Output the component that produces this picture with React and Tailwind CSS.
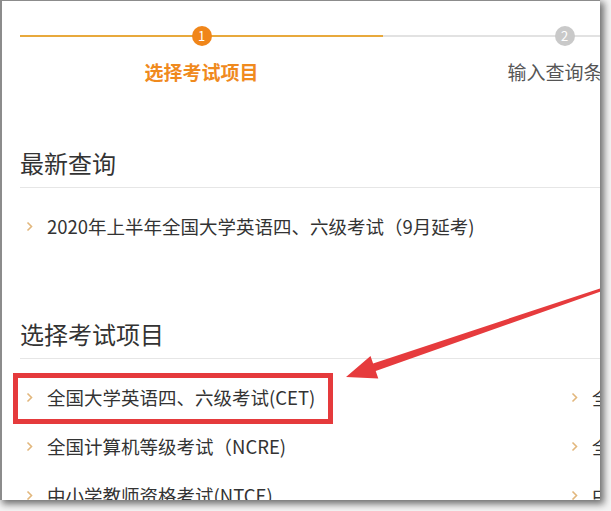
import React from 'react';

const font = { fontFamily: '"Noto Sans CJK SC", "Noto Sans", sans-serif' };

function Chevron() {
  return (
    <svg width="7" height="11" viewBox="0 0 7 11" className="shrink-0">
      <path d="M1.5 1.5 L5.5 5.5 L1.5 9.5" stroke="#e2b77c" strokeWidth="1.6" fill="none" />
    </svg>
  );
}

function Item({ children }) {
  return (
    <div className="h-[49px] flex items-center whitespace-nowrap">
      <span className="w-[13px] flex justify-end"><Chevron /></span>
      <span className="pl-[14px] text-[18.5px] text-[#333]">{children}</span>
    </div>
  );
}

function Step({ n, label, active }) {
  return (
    <div className="w-[363px] shrink-0 flex flex-col items-center">
      <div className="relative w-full h-[20px] flex items-center justify-center">
        <div className={`absolute left-0 right-0 top-[9px] h-[2px] ${active ? 'bg-[#e8a93c]' : 'bg-[#e2e2e2]'}`} />
        <div className={`relative w-[20px] h-[20px] rounded-full flex items-center justify-center text-[13px] text-white ${active ? 'bg-[#f0861a]' : 'bg-[#c9c9c9]'}`}>
          {n}
        </div>
      </div>
      <div className={`mt-[14px] leading-[24px] text-[19px] whitespace-nowrap ${active ? 'font-bold text-[#f08a1e]' : 'text-[#555]'}`}>
        {label}
      </div>
    </div>
  );
}

export default function App() {
  return (
    <div className="w-[611px] h-[511px] bg-[#f4f4f4] overflow-hidden" style={font}>
      <div className="relative w-[600px] h-[500px] bg-white border-l-2 border-t border-[#8c8c8c] overflow-hidden shadow-[3px_3px_7px_1px_rgba(0,0,0,0.55)]">
        <div className="pl-[18px]">
          {/* stepper */}
          <div className="pt-[25px] flex">
            <Step n="1" label="选择考试项目" active />
            <Step n="2" label="输入查询条件" />
          </div>

          {/* latest */}
          <div className="mt-[63px] leading-[32px] pb-[8px] border-b border-[#e6e6e6] text-[24px] text-[#333]">
            最新查询
          </div>
          <div className="pt-[14px]">
            <Item>2020年上半年全国大学英语四、六级考试（9月延考)</Item>
          </div>

          {/* choose */}
          <div className="mt-[67px] leading-[32px] pb-[8px] border-b border-[#e6e6e6] text-[24px] text-[#333]">
            选择考试项目
          </div>
          <div className="pt-[14px] grid grid-cols-[545px_545px]">
            <div>
              <Item>全国大学英语四、六级考试(CET)</Item>
              <Item>全国计算机等级考试（NCRE)</Item>
              <Item>中小学教师资格考试(NTCE)</Item>
            </div>
            <div>
              <Item>全国英语等级考试(PETS)</Item>
              <Item>全国计算机应用水平考试(NIT)</Item>
              <Item>中小学教师资格考试面试</Item>
            </div>
          </div>
        </div>

        {/* annotation overlay */}
        <div className="absolute left-[-2px] top-[-1px] w-[600px] h-[500px] pointer-events-none">
          <div className="absolute left-[13px] top-[373px] w-[320px] h-[51px] border-[5px] border-[#e53a3c]" />
          <svg width="600" height="500" viewBox="0 0 600 500" className="absolute left-0 top-0">
            <polygon
              points="346,377 378.3,378.6 375.7,371.1 605.5,289.7 604.5,286.9 373.1,363.5 370.5,356"
              fill="#e63b3d"
            />
          </svg>
        </div>
      </div>
    </div>
  );
}
